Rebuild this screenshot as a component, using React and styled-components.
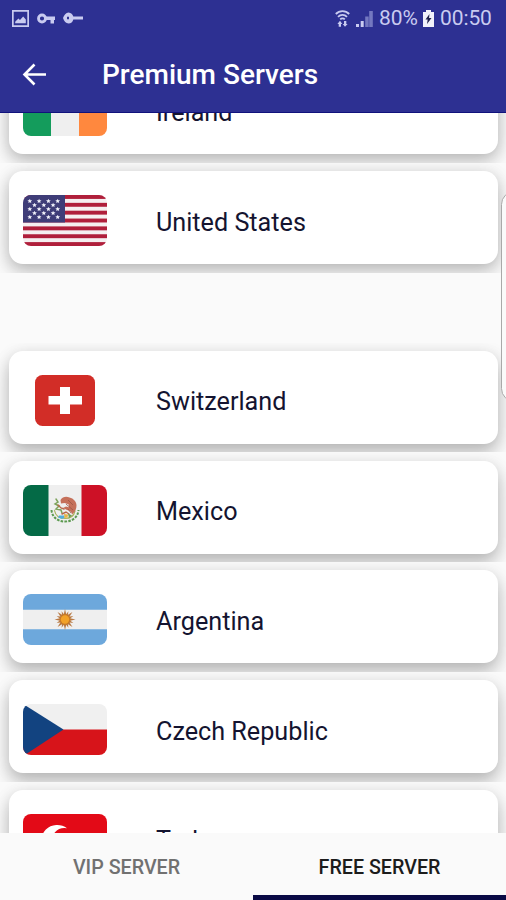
import React, { useState } from "react";
import styled, { createGlobalStyle } from "styled-components";

const Ireland = () => (
  <Flag viewBox="0 0 84 51">
    <path fill="#efefef" d="M27 0h29v51H27z" />
    <path fill="#149c5c" d="M28 0H8a8 8 0 0 0-8 8v35a8 8 0 0 0 8 8h20z" />
    <path fill="#ff883e" d="M56 0h20a8 8 0 0 1 8 8v35a8 8 0 0 1-8 8H56z" />
  </Flag>
);

const stars = [0, 1, 2, 3, 4].flatMap((row) =>
  Array.from({ length: row % 2 ? 3 : 4 }, (_, col) => ({
    x: 6.8 + col * 9.3 + (row % 2 ? 4.7 : 0),
    y: 6 + row * 4,
  }))
);

const UnitedStates = () => (
  <Flag viewBox="0 0 84 51">
    <clipPath id="us">
      <rect width="84" height="51" rx="8" />
    </clipPath>
    <g clipPath="url(#us)">
      <path fill="#f5eff0" d="M0 0h84v51H0z" />
      {[0, 1, 2, 3, 4, 5, 6].map((i) => (
        <rect key={i} y={i * 7.85} width="84" height="3.92" fill="#b01f3b" />
      ))}
      <path fill="#3f3d78" d="M0 0h42v27.4H0z" />
      {stars.map(({ x, y }) => (
        <path
          key={`${x}-${y}`}
          fill="#f2f2fa"
          transform={`translate(${x} ${y})`}
          d="M0-2.2l.7 1.4 1.7.1-1.3 1.1.4 1.7L0 1.2l-1.5.9.4-1.7L-2.4-.7l1.7-.1z"
        />
      ))}
    </g>
  </Flag>
);

const Switzerland = () => (
  <Flag viewBox="0 0 84 51">
    <rect x="12" width="60" height="51" rx="7.5" fill="#d22d27" />
    <path fill="#fff" d="M37 12h10v9h12v8.500H47V39H37v-9.500H25.500V21H37z" />
  </Flag>
);

const Mexico = () => (
  <Flag viewBox="0 0 84 51">
    <path fill="#efefef" d="M25 0h34v51H25z" />
    <path fill="#046a46" d="M25.500 0H8a8 8 0 0 0-8 8v35a8 8 0 0 0 8 8h17.500z" />
    <path fill="#cd1126" d="M58.500 0H76a8 8 0 0 1 8 8v35a8 8 0 0 1-8 8H58.500z" />
    <g fill="none" strokeLinecap="round">
      <path
        stroke="#5c9a50"
        strokeWidth="2"
        strokeDasharray="2.6 1.2"
        strokeLinecap="butt"
        d="M28.500 25c.5 7 6 11.500 13.500 11.500S55 32 55.500 25"
      />
      <path stroke="#a8b25a" strokeWidth="1.200" d="M31.500 25.500c1 5 5 8 10.500 8s9-3 10-7.500" />
      <path stroke="#7da35c" strokeWidth="1.500" d="M33 14l2 3-3 2 4 2-3 3 5 1 1 3" />
      <path stroke="#b7684a" strokeWidth="1.400" d="M35 20l3 3 3 1m-2 5l4-2 3 2" />
    </g>
    <path
      fill="#c5705a"
      d="M37.500 15c2-3.500 6-4 9-2.500 4 1 7 4 7 8 0 4-2 7-4.500 9-.5-3-2.500-4-5-4.500l-4-2 3-1.500 3 .8-.5-3-4-1.300-3.500.5z"
    />
    <path fill="none" stroke="#9a5546" strokeWidth=".8" d="M45 15l5 5m-7-1l7 6m-5-1l3 4" />
    <path fill="#54aedb" d="M36 30.500h5l1 2-3 1.500-4-1.500z" />
    <path fill="#e8b548" d="M41 29l4 .5-.5 3-3 .5z" />
    <path fill="#6c9b54" d="M45 28.500l4 2-3 2.500z" />
  </Flag>
);

const Argentina = () => (
  <Flag viewBox="0 0 84 51">
    <path fill="#efefef" d="M0 15h84v21H0z" />
    <path fill="#6da8dc" d="M0 15.800V8a8 8 0 0 1 8-8h68a8 8 0 0 1 8 8v7.800z" />
    <path fill="#6da8dc" d="M0 35.200V43a8 8 0 0 0 8 8h68a8 8 0 0 0 8-8v-7.800z" />
    <g transform="translate(42 25.500)">
      {Array.from({ length: 16 }, (_, i) => (
        <path
          key={i}
          fill="#b97a45"
          transform={`rotate(${i * 22.5})`}
          d={i % 2 ? "M-1.300-4L0-9l1.300 5z" : "M-1.500-4L0-10.500l1.500 6.500z"}
        />
      ))}
      <circle r="5.400" fill="#c77a28" />
      <circle r="4.200" fill="#f2a229" />
    </g>
  </Flag>
);

const CzechRepublic = () => (
  <Flag viewBox="0 0 84 51">
    <clipPath id="cz">
      <rect width="84" height="51" rx="8" />
    </clipPath>
    <g clipPath="url(#cz)">
      <path fill="#f0f0f0" d="M0 0h84v26H0z" />
      <path fill="#d7141a" d="M0 25.500h84V51H0z" />
      <path fill="#124380" d="M0 0l2.500 1.500L40.500 25.500 4 49.500 0 51z" />
    </g>
  </Flag>
);

const Turkey = () => (
  <Flag viewBox="0 0 84 51">
    <rect width="84" height="51" rx="8" fill="#e30a17" />
    <path
      fill="#fff"
      d="M44 14.300A15.500 14.500 0 1 0 44 36.700 12 11.500 0 1 1 44 14.300z"
    />
    <path fill="#fff" d="M45 25.500l10-3.300-6.200 8.500V20.300l6.200 8.500z" />
  </Flag>
);

const premiumServers = [
  { name: "Ireland", flag: <Ireland /> },
  { name: "United States", flag: <UnitedStates /> },
];

const freeServers = [
  { name: "Switzerland", flag: <Switzerland /> },
  { name: "Mexico", flag: <Mexico /> },
  { name: "Argentina", flag: <Argentina /> },
  { name: "Czech Republic", flag: <CzechRepublic /> },
  { name: "Turkey", flag: <Turkey /> },
];

function StatusBar() {
  return (
    <StatusBarStyle>
      <StatusGroup $gap="8px">
        <svg width="17" height="17" viewBox="0 0 16 16">
          <path fill="none" stroke="currentColor" strokeWidth="1.6" d="M.8.8h14.400v14.400H.8z" />
          <path fill="currentColor" d="M3 12.500V11l3-3 1.500 1.500L10.500 6l2.500 3v3.500z" />
        </svg>
        <svg width="18" height="11" viewBox="0 0 18 11">
          <circle cx="5" cy="5.500" r="3.500" fill="none" stroke="currentColor" strokeWidth="2.800" />
          <path fill="currentColor" d="M9 3.600h9v3.400h-1v3.500h-3.500V7H9z" />
        </svg>
        <svg width="21" height="12" viewBox="0 0 21 12">
          <path
            fill="currentColor"
            fillRule="evenodd"
            d="M5.500.5a5.500 5.500 0 0 1 4.800 4.100H20v2.800h-9.700a5.500 5.500 0 0 1-4.800 4.100C3 11.500 1 9 0 6 1 3 3 .5 5.500.5zM4 4.700v2.600h2V4.700z"
          />
        </svg>
      </StatusGroup>
      <StatusGroup $gap="6px">
        <svg width="15" height="17" viewBox="0 0 15 17">
          <g fill="none" stroke="currentColor" strokeWidth="1.800">
            <path d="M.8 4C4.500.2 10.500.2 14.200 4M3 6.800c2.500-2.500 6.500-2.500 9 0M5.200 9.300c1.300-1.300 3.300-1.300 4.600 0" />
          </g>
          <path fill="currentColor" d="M5 10.800l2.300 3.200H6v2.700H3.700V14H2.400zM10 16.800L7.700 14H9v-3h2.300v3h1.300z" />
        </svg>
        <svg width="17" height="17" viewBox="0 0 17 17">
          <path fill="currentColor" d="M0 14h3v3H0zM4.700 11h3v6h-3z" />
          <path fill="#7478c0" d="M9.200 6.500h3.500V17H9.200zM13.200 1h3.600v16h-3.600z" />
        </svg>
        <StatusText $width="38px">80%</StatusText>
        <svg width="11" height="17" viewBox="0 0 11 17">
          <path fill="#f1f1fa" d="M3 0h5v2h3v15H0V2h3z" />
          <path fill="#20224a" d="M6.500 4L2.500 9.500h2.200L4 14l4.500-6H6z" />
        </svg>
        <StatusText $width="54px">00:50</StatusText>
      </StatusGroup>
    </StatusBarStyle>
  );
}

function ServerItem({ name, flag, shadow }) {
  return (
    <Item>
      <Card $shadow={shadow}>
        {flag}
        <ServerName>{name}</ServerName>
      </Card>
    </Item>
  );
}

export default function App() {
  const [tab, setTab] = useState("free");

  return (
    <Screen>
      <GlobalStyle />
      <StatusBar />
      <Toolbar>
        <BackButton type="button" aria-label="Back">
          <svg width="25" height="23" viewBox="0 0 25 23">
            <path
              fill="none"
              stroke="#fff"
              strokeWidth="2.600"
              d="M24 11.500H2.500M12.500 1.500l-10 10 10 10"
            />
          </svg>
        </BackButton>
        <Title>Premium Servers</Title>
      </Toolbar>
      <Content>
        <List>
          {premiumServers.map((server) => (
            <ServerItem key={server.name} shadow="7px" {...server} />
          ))}
          <Spacer />
          {freeServers.map((server) => (
            <ServerItem key={server.name} shadow="10px" {...server} />
          ))}
        </List>
        <EdgeHandle />
      </Content>
      <Tabs>
        <Tab type="button" $active={tab === "vip"} onClick={() => setTab("vip")}>
          VIP SERVER
        </Tab>
        <Tab type="button" $active={tab === "free"} onClick={() => setTab("free")}>
          FREE SERVER
        </Tab>
      </Tabs>
    </Screen>
  );
}

const GlobalStyle = createGlobalStyle`
  * {
    box-sizing: border-box;
  }

  body {
    margin: 0;
    font-family: Roboto, "Liberation Sans", sans-serif;
  }

  svg {
    display: block;
    flex-shrink: 0;
  }
`;

const Screen = styled.div`
  display: flex;
  flex-direction: column;
  width: 506px;
  height: 900px;
  background-color: #fafafa;
  overflow: hidden;
`;

const StatusBarStyle = styled.div`
  display: flex;
  justify-content: space-between;
  align-items: center;
  height: 36px;
  padding: 0 12px;
  background-color: #2d3092;
  color: #c9cbf0;
`;

const StatusGroup = styled.div`
  display: flex;
  align-items: center;
  gap: ${({ $gap }) => $gap};
`;

const StatusText = styled.span`
  width: ${({ $width }) => $width};
  font-size: 21px;
  line-height: 24px;
  letter-spacing: -0.1px;
  white-space: nowrap;
`;

const Toolbar = styled.header`
  display: flex;
  align-items: center;
  height: 77px;
  padding-left: 22px;
  background-color: #2d3092;
  border-bottom: 1px solid #10127c;
`;

const BackButton = styled.button`
  padding: 0;
  border: none;
  background: none;
  cursor: pointer;
`;

const Title = styled.h1`
  margin: 1px 0 0 55px;
  font-size: 28px;
  font-weight: 500;
  color: #fff;
`;

const Content = styled.main`
  position: relative;
  height: 720px;
  overflow: hidden;
`;

const List = styled.div`
  margin-top: -60px;
`;

const Item = styled.div`
  height: 109.75px;
  padding: 8.250px 8px 8.500px 9px;
  overflow: hidden;
`;

const Card = styled.div`
  display: flex;
  align-items: center;
  height: 100%;
  padding: 6px 14px 0;
  border-radius: 14px;
  background-color: #fff;
  box-shadow: 0 ${({ $shadow }) => $shadow} 18px rgba(0, 0, 0, 0.22),
    0 2px 16px rgba(0, 0, 0, 0.1);
`;

const Flag = styled.svg`
  width: 84px;
  height: 51px;
`;

const ServerName = styled.span`
  margin: 3px 0 0 49px;
  font-size: 25.2px;
  color: #141430;
`;

const Spacer = styled.div`
  height: 70px;
`;

const EdgeHandle = styled.div`
  position: absolute;
  top: 78px;
  right: -22px;
  width: 27px;
  height: 211px;
  border: 1px solid #a9a9a9;
  border-radius: 14px;
  background-color: #fafafa;
`;

const Tabs = styled.nav`
  display: grid;
  grid-template-columns: 1fr 1fr;
  height: 67px;
  background-color: #fafafa;
`;

const Tab = styled.button`
  padding: 7px 0 0;
  border: none;
  border-bottom: 5px solid ${({ $active }) => ($active ? "#0a0a45" : "transparent")};
  background: none;
  font-family: inherit;
  font-size: 19.7px;
  font-weight: 500;
  color: ${({ $active }) => ($active ? "#1c1c1c" : "#717171")};
  cursor: pointer;
`;
